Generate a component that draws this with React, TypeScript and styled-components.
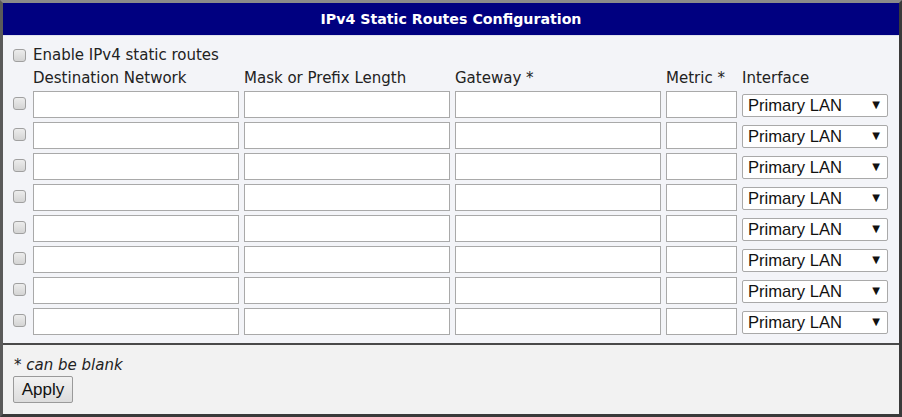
import React from "react";
import styled, { createGlobalStyle } from "styled-components";

const GlobalStyle = createGlobalStyle`
	html, body {
		margin: 0;
		padding: 0;
		background: #ffffff;
	}
	body {
		font-family: "DejaVu Sans", Verdana, sans-serif;
		color: #222;
	}
`;

const Frame = styled.div`
	width: 902px;
	height: 417px;
	box-sizing: border-box;
	border: 3px solid #3a3a3a;
	border-top-color: #8a8a8a;
	border-left-color: #5a5a5a;
	display: flex;
	flex-direction: column;
	background: #f2f2f2;
`;

const Title = styled.div`
	height: 32px;
	background: #000080;
	color: #fff;
	font-weight: bold;
	font-size: 14.2px;
	display: flex;
	align-items: center;
	justify-content: center;
	border-bottom: 1px solid #dfe2ee;
`;

const Body = styled.div`
	background: #f3f4f8;
	padding: 9px 0 8px 10px;
	border-bottom: 2px solid #4a4a4a;
	display: flex;
	flex-direction: column;
`;

const EnableRow = styled.label`
	display: flex;
	align-items: center;
	gap: 7px;
	height: 20px;
	font-size: 15px;
`;

const Grid = styled.div`
	display: grid;
	grid-template-columns: 15px 206px 206px 206px 71px 146px;
	column-gap: 5px;
	row-gap: 4px;
	margin-top: 3px;
	align-items: center;
`;

const Label = styled.div<{ $col: number }>`
	grid-column: ${(p) => p.$col};
	font-size: 15px;
	height: 20px;
	line-height: 20px;
	margin-bottom: -1px;
	white-space: nowrap;
`;

const Check = styled.input.attrs({ type: "checkbox" })`
	appearance: none;
	-webkit-appearance: none;
	width: 13px;
	height: 13px;
	margin: 0;
	box-sizing: border-box;
	border: 1px solid #a0a0a0;
	border-radius: 3px;
	background: linear-gradient(#ececec, #d4d4d4);
`;

const CheckCell = styled.div`
	grid-column: 1;
	display: flex;
	align-items: center;
	height: 27px;
	padding-bottom: 2px;
	box-sizing: border-box;
`;

const TextInput = styled.input.attrs({ type: "text" })`
	box-sizing: border-box;
	height: 27px;
	width: 100%;
	border: 1px solid #a9a9a9;
	background: #fff;
	font-size: 14px;
	padding: 2px 4px;
	outline: none;
`;

const SelectWrap = styled.div`
	position: relative;
	height: 23px;
	margin-top: 1px;
`;

const Select = styled.select`
	appearance: none;
	-webkit-appearance: none;
	width: 100%;
	height: 23px;
	box-sizing: border-box;
	border: 1px solid #a9a9a9;
	border-radius: 2px;
	background: #fff;
	font-family: "Liberation Sans", Arial, sans-serif;
	font-size: 16.6px;
	color: #111;
	padding: 0 0 0 5px;
	outline: none;
`;

const Arrow = styled.span`
	position: absolute;
	right: 8px;
	top: 5px;
	font-size: 10px;
	color: #111;
	pointer-events: none;
`;

const Footer = styled.div`
	flex: 1;
	background: #f2f2f2;
	padding: 10px 10px 0 10px;
	display: flex;
	flex-direction: column;
	align-items: flex-start;
`;

const Note = styled.div`
	font-size: 15px;
	font-style: italic;
	margin-left: 1px;
	height: 20px;
	line-height: 20px;
`;

const Button = styled.button`
	margin-top: 1px;
	height: 27px;
	width: 60px;
	box-sizing: border-box;
	border: 1px solid #9a9a9a;
	border-radius: 2px;
	background: linear-gradient(#f2f2f2, #dcdcdc);
	font-family: "Liberation Sans", Arial, sans-serif;
	font-size: 17px;
	color: #111;
	padding: 0;
`;

const rows = Array.from({ length: 8 }, (_, i) => i);

export default function App() {
	return (
		<>
			<GlobalStyle />
			<Frame>
				<Title>IPv4 Static Routes Configuration</Title>
				<Body>
					<EnableRow>
						<Check />
						Enable IPv4 static routes
					</EnableRow>
					<Grid>
						<Label $col={2}>Destination Network</Label>
						<Label $col={3}>Mask or Prefix Length</Label>
						<Label $col={4}>Gateway *</Label>
						<Label $col={5}>Metric *</Label>
						<Label $col={6}>Interface</Label>
						{rows.map((r) => (
							<React.Fragment key={r}>
								<CheckCell>
									<Check />
								</CheckCell>
								<TextInput />
								<TextInput />
								<TextInput />
								<TextInput />
								<SelectWrap>
									<Select defaultValue="lan">
										<option value="lan">Primary LAN</option>
									</Select>
									<Arrow>▼</Arrow>
								</SelectWrap>
							</React.Fragment>
						))}
					</Grid>
				</Body>
				<Footer>
					<Note>* can be blank</Note>
					<Button>Apply</Button>
				</Footer>
			</Frame>
		</>
	);
}
